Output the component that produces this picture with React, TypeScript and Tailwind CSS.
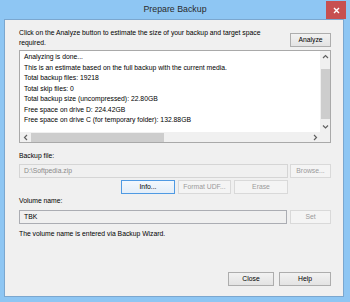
import React from "react";

const lines = [
  "Analyzing is done...",
  "This is an estimate based on the full backup with the current media.",
  "Total backup files: 19218",
  "Total skip files: 0",
  "Total backup size (uncompressed): 22.80GB",
  "Free space on drive D: 224.42GB",
  "Free space on drive C (for temporary folder): 132.88GB",
];

function Chevron({ dir }: { dir: "up" | "down" | "left" | "right" }) {
  const d = {
    up: "M1 4 L3.5 1.5 L6 4",
    down: "M1 1.5 L3.5 4 L6 1.5",
    left: "M4 1 L1.5 3.5 L4 6",
    right: "M2 1 L4.5 3.5 L2 6",
  }[dir];
  const vertical = dir === "up" || dir === "down";
  return (
    <svg
      width={vertical ? 7 : 6}
      height={vertical ? 6 : 7}
      viewBox={vertical ? "0 0 7 6" : "0 0 6 7"}
    >
      <path d={d} fill="none" stroke="#606060" strokeWidth="1.2" />
    </svg>
  );
}

function Btn({
  label,
  w,
  disabled,
  focused,
}: {
  label: string;
  w: string;
  disabled?: boolean;
  focused?: boolean;
}) {
  const base =
    "flex h-[14px] items-center justify-center border text-[6.8px] leading-none";
  if (disabled)
    return (
      <div className={`${base} ${w} border-[#d9d9d9] bg-[#f4f4f4] text-[#9a9a9a]`}>
        {label}
      </div>
    );
  return (
    <div
      className={`${base} ${w} bg-gradient-to-b from-[#f2f2f2] to-[#e3e3e3] text-black ${
        focused ? "border-[#4f9ae3] from-[#f3f8fd] to-[#e4eef8]" : "border-[#adadad]"
      }`}
    >
      {label}
    </div>
  );
}

export default function App() {
  return (
    <div
      className="flex h-[302px] w-[350px] flex-col bg-[#8ec6f3]"
      style={{ fontFamily: '"Liberation Sans", Arial, sans-serif' }}
    >
      {/* title bar */}
      <div className="relative flex h-[19px] items-center justify-center text-[8.8px] text-[#2b2b2b]">
        Prepare Backup
        <div className="absolute right-[4px] top-[1px] flex h-[18px] w-[20px] items-center justify-center bg-[#c75050]">
          <svg width="7" height="7" viewBox="0 0 7 7">
            <path d="M1 1 L6 6 M6 1 L1 6" stroke="#fff" strokeWidth="1.4" />
          </svg>
        </div>
      </div>

      {/* client area */}
      <div className="mb-[5px] ml-[4px] mr-[6px] flex flex-1 flex-col border border-[#7ba7cf] bg-[#f0f0f0] pl-[14px] pr-[12px] pt-[8px] pb-[10px] text-[6.8px] text-black">
        <div className="flex items-start">
          <p className="flex-1 leading-[9.5px]">
            Click on the Analyze button to estimate the size of your backup and target space
            <br />
            required.
          </p>
          <div className="mt-[5px]">
            <Btn label="Analyze" w="w-[41px]" />
          </div>
        </div>

        {/* output list */}
        <div className="mt-[3px] flex h-[93px] flex-col border border-[#a9a9a9] bg-white">
          <div className="flex min-h-0 flex-1">
            <div className="flex-1 overflow-hidden whitespace-nowrap pl-[4px] pt-[1px] leading-[10.5px]">
              {lines.map((l) => (
                <div key={l}>{l}</div>
              ))}
            </div>
            <div className="flex w-[10px] flex-col bg-[#f0f0f0]">
              <div className="flex h-[11px] items-center justify-center">
                <Chevron dir="up" />
              </div>
              <div className="flex-1">
                <div className="mx-auto mt-[7px] h-[50px] w-[9px] bg-[#cdcdcd]" />
              </div>
              <div className="flex h-[11px] items-center justify-center">
                <Chevron dir="down" />
              </div>
            </div>
          </div>
          <div className="flex h-[10px]">
            <div className="flex flex-1 bg-[#f0f0f0]">
              <div className="flex w-[11px] items-center justify-center">
                <Chevron dir="left" />
              </div>
              <div className="flex flex-1 items-center">
                <div className="h-[9px] w-[133px] bg-[#cdcdcd]" />
              </div>
              <div className="flex w-[11px] items-center justify-center">
                <Chevron dir="right" />
              </div>
            </div>
            <div className="w-[10px] bg-[#f0f0f0]" />
          </div>
        </div>

        <p className="mt-[8px] leading-[10px]">Backup file:</p>
        <div className="mt-[3px] flex gap-[2px]">
          <div className="flex h-[14px] flex-1 items-center border border-[#d5d5d5] bg-[#f0f0f0] pl-[4px] text-[#8a8a8a]">
            D:\Softpedia.zip
          </div>
          <Btn label="Browse..." w="w-[41px]" disabled />
        </div>
        <div className="mt-[2px] flex justify-end gap-[3px] pr-[43px]">
          <Btn label="Info..." w="w-[54px]" focused />
          <Btn label="Format UDF..." w="w-[53px]" disabled />
          <Btn label="Erase" w="w-[54px]" disabled />
        </div>

        <p className="mt-[2px] leading-[10px]">Volume name:</p>
        <div className="mt-[4px] flex gap-[3px]">
          <div className="flex h-[14px] flex-1 items-center border border-[#abadb3] bg-[#f0f0f0] pl-[4px]">
            TBK
          </div>
          <Btn label="Set" w="w-[41px]" disabled />
        </div>
        <p className="mt-[5px] leading-[10px]">The volume name is entered via Backup Wizard.</p>

        <div className="mt-auto flex justify-end gap-[5px]">
          <Btn label="Close" w="w-[46px]" />
          <Btn label="Help" w="w-[52px]" />
        </div>
      </div>
    </div>
  );
}
